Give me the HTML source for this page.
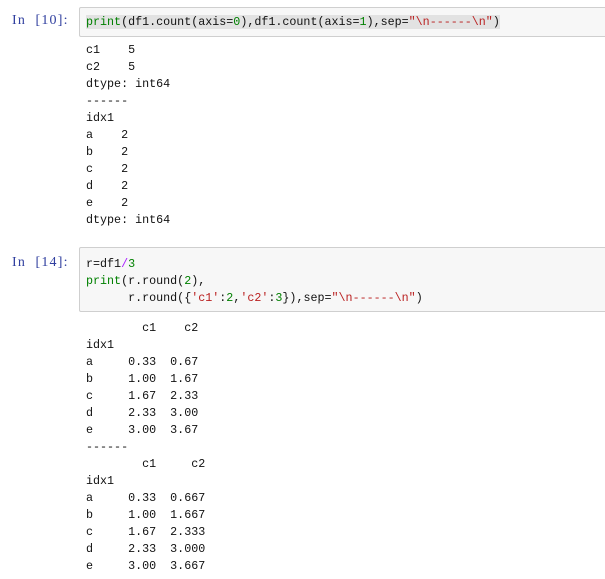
<!DOCTYPE html>
<html><head><meta charset="utf-8"><style>
body{margin:0;background:#fff;width:605px;height:579px;overflow:hidden;position:relative;font-family:"Liberation Mono","Noto Sans CJK SC",monospace;font-size:11.7px;color:#111}
.p{position:absolute;color:#303F9F;font-family:"Liberation Serif",serif;font-size:14px;letter-spacing:1.2px}
.box{position:absolute;left:79px;right:-2px;background:#f7f7f7;border:1px solid #cfcfcf;border-radius:2px}
pre{position:absolute;left:86px;margin:0;font:inherit;line-height:17px;white-space:pre}
.g{color:#008000}.n{color:#008000}.s{color:#BA2121}.o{color:#AA22FF}
.sel{background:#e2e2e2}
</style></head><body>
<div class="p" style="left:12px;top:13px">In&nbsp;&nbsp;[10]:</div>
<div class="box" style="top:7px;height:28px"></div>
<pre style="top:14px"><span class="sel"><span class="g">print</span>(df1.count(axis=<span class="n">0</span>),df1.count(axis=<span class="n">1</span>),sep=<span class="s">"\n------\n"</span>)</span></pre>
<pre style="top:42px">c1    5
c2    5
dtype: int64
------
idx1
a    2
b    2
c    2
d    2
e    2
dtype: int64</pre>
<div class="p" style="left:12px;top:255px">In&nbsp;&nbsp;[14]:</div>
<div class="box" style="top:247px;height:63px"></div>
<pre style="top:256px">r=df1<span class="o">/</span><span class="n">3</span>
<span class="g">print</span>(r.round(<span class="n">2</span>),
      r.round({<span class="s">'c1'</span>:<span class="n">2</span>,<span class="s">'c2'</span>:<span class="n">3</span>}),sep=<span class="s">"\n------\n"</span>)</pre>
<pre style="top:320px">        c1    c2
idx1
a     0.33  0.67
b     1.00  1.67
c     1.67  2.33
d     2.33  3.00
e     3.00  3.67
------
        c1     c2
idx1
a     0.33  0.667
b     1.00  1.667
c     1.67  2.333
d     2.33  3.000
e     3.00  3.667</pre>
</body></html>
